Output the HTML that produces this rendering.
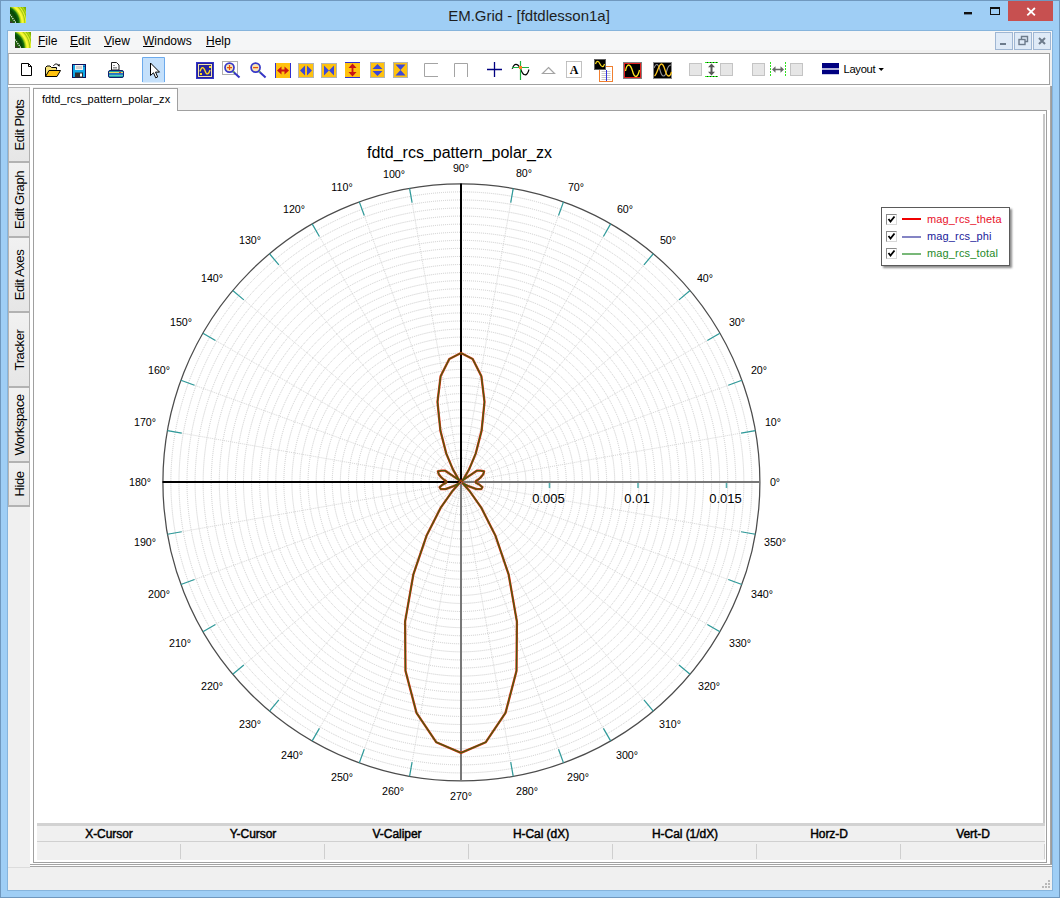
<!DOCTYPE html>
<html lang="en">
<head>
<meta charset="utf-8">
<title>EM.Grid - [fdtdlesson1a]</title>
<style>
*{box-sizing:border-box;margin:0;padding:0}
html,body{width:1060px;height:898px;overflow:hidden}
body{position:relative;background:#9fcef5;font-family:"Liberation Sans",Arial,sans-serif;font-size:12px;color:#000}
.abs{position:absolute}
#frame{position:absolute;left:0;top:0;width:1060px;height:898px;border:1px solid #7098be}
#shade{position:absolute;left:7px;top:30px;width:1046px;height:861px;border:1px solid #86b4dc}
#title{position:absolute;left:0;top:0;width:1060px;height:31px;text-align:center;font-size:15px;line-height:31px;color:#1e1e1e}
#title span{position:relative;left:-1px;top:0px}
.appico{position:absolute;width:16px;height:16px;overflow:hidden}
#client{position:absolute;left:8px;top:31px;width:1044px;height:859px;background:#f0f0f0}
#menubar{position:absolute;left:8px;top:31px;width:1044px;height:19px;background:#f5f6f7}
.mi{position:absolute;top:34px;font-size:12px;line-height:14px;height:14px;white-space:nowrap}
.mi u{text-decoration:underline;text-underline-offset:1px}
.mdib{position:absolute;top:32px;width:18px;height:18px;background:#dfeaf7;border:1px solid #9fb6d3}
#toolbar{position:absolute;left:8px;top:53px;width:1042px;height:32px;background:#fff;border:1px solid #a0a0a0;border-left-color:#b8b8b8}
#tbwhite{position:absolute;left:8px;top:85px;width:1042px;height:2px;background:#fff}
#redge{position:absolute;left:1050px;top:86px;width:2px;height:780px;background:#9c9c9c;border-left:1px solid #a6a6a6}
#ltabs{position:absolute;left:8px;top:87px;width:22px;height:779px;background:#f0f0f0}
.vt{position:absolute;left:8px;width:22px;border-top:2px solid #b2b2b2;border-right:1px solid #b0b0b0;border-left:1px solid #b4b4b4;background:linear-gradient(#f1f1f1,#e6e6e6)}
.vt span{position:absolute;left:50%;top:50%;white-space:nowrap;font-size:13px;letter-spacing:-0.4px;transform:translate(-50%,-50%) rotate(-90deg);transform-origin:center}
#mdiwhite{position:absolute;left:30px;top:87px;width:1020px;height:777px;background:#fff}
#tabrow{position:absolute;left:33px;top:87px;width:1017px;height:23px;background:#f0f0f0}
#panel{position:absolute;left:33px;top:110px;width:1014px;height:753px;background:#fff;border:1px solid #a0a0a0}
#ptab{position:absolute;left:33px;top:88px;width:145px;height:23px;background:#fff;border:1px solid #a0a0a0;border-bottom:none;font-size:11px;line-height:20px;padding-left:8px;white-space:nowrap;letter-spacing:0.04px}
#botline{position:absolute;left:30px;top:864px;width:1022px;height:3px;background:#fff;border-top:1px solid #a4a4a4;border-bottom:1px solid #a4a4a4}
#statline{position:absolute;left:8px;top:867px;width:22px;height:1px;background:#dcdcdc}
#vsplit{position:absolute;left:1043px;top:114px;width:2px;height:709px;background:#c8c8c8}
#hsplit{position:absolute;left:37px;top:823px;width:1008px;height:3px;background:#d2d2d2}
#ctab{position:absolute;left:37px;top:826px;width:1008px;height:34px;background:#f0f0f0}
#ctab .h{position:absolute;top:1px;height:15px;width:144px;text-align:center;font-size:12px;font-weight:normal;-webkit-text-stroke:0.45px #000;line-height:15px;letter-spacing:-0.05px}
#ctab .sep{position:absolute;left:0;top:15px;width:1008px;height:1px;background:#d0d0d0}
#ctab .c{position:absolute;top:18px;width:1px;height:15px;background:#cfcfcf}
#legend{position:absolute;left:881px;top:207px;width:129px;height:59px;background:#fff;border:1px solid #5a5a5a;box-shadow:2px 2px 2px rgba(0,0,0,.45)}
.lg{position:absolute;left:0;height:17px;width:128px;font-size:11px;line-height:17px}
.lg .cb{position:absolute;left:4px;top:3px;width:11px;height:11px;background:#fff;border:1px solid #8a8a8a;border-right-color:#d8d8d8;border-bottom-color:#d8d8d8}
.lg .cb svg{position:absolute;left:0;top:0}
.lg .ln{position:absolute;left:20px;top:8px;width:19px}
.lg .tx{position:absolute;left:45px;top:0;white-space:nowrap;letter-spacing:0.15px}
.grip i{position:absolute;width:2px;height:2px;background:#b8b8b8}
</style>
</head>
<body>
<div id="frame"></div>
<div id="title"><span>EM.Grid - [fdtdlesson1a]</span></div>
<!-- caption buttons -->
<svg class="abs" style="left:960px;top:0" width="100" height="31" viewBox="0 0 100 31">
<rect x="48" y="1" width="45" height="20" fill="#c75050"/>
<path d="M67.3 8 l7.6 7.4 M74.9 8 l-7.6 7.4" stroke="#fff" stroke-width="1.8" fill="none"/>
<rect x="4" y="12" width="8" height="2.4" fill="#111"/>
<rect x="30.5" y="7.5" width="9" height="7" fill="none" stroke="#111" stroke-width="1"/>
<rect x="30" y="7" width="10" height="2" fill="#111"/>
</svg>
<div id="shade"></div>
<div id="client"></div>
<div id="menubar"></div>
<svg class="abs" style="left:10px;top:7px" width="16" height="16" viewBox="0 0 16 16"><defs><radialGradient id="ga" cx="-8" cy="16" r="30" gradientUnits="userSpaceOnUse"><stop offset="0" stop-color="#3a6a10"/><stop offset="0.38" stop-color="#1c5c0c"/><stop offset="0.50" stop-color="#064406"/><stop offset="0.57" stop-color="#157010"/><stop offset="0.62" stop-color="#a8d018"/><stop offset="0.67" stop-color="#ffff38"/><stop offset="0.72" stop-color="#f0f030"/><stop offset="0.76" stop-color="#a0c810"/><stop offset="0.79" stop-color="#e8f434"/><stop offset="0.83" stop-color="#94c008"/><stop offset="0.86" stop-color="#b8dc18"/><stop offset="0.90" stop-color="#80b400"/><stop offset="1" stop-color="#6a9c00"/></radialGradient></defs><rect width="16" height="16" fill="url(#ga)"/><path d="M0 7.500 L6 16" stroke="#fff" stroke-width="1.100" stroke-dasharray="1.200 1" fill="none"/><rect x="0" y="14.500" width="2.500" height="1.500" fill="#403038"/></svg><svg class="abs" style="left:15px;top:32px" width="16" height="16" viewBox="0 0 16 16"><defs><radialGradient id="gb" cx="-8" cy="16" r="30" gradientUnits="userSpaceOnUse"><stop offset="0" stop-color="#3a6a10"/><stop offset="0.38" stop-color="#1c5c0c"/><stop offset="0.50" stop-color="#064406"/><stop offset="0.57" stop-color="#157010"/><stop offset="0.62" stop-color="#a8d018"/><stop offset="0.67" stop-color="#ffff38"/><stop offset="0.72" stop-color="#f0f030"/><stop offset="0.76" stop-color="#a0c810"/><stop offset="0.79" stop-color="#e8f434"/><stop offset="0.83" stop-color="#94c008"/><stop offset="0.86" stop-color="#b8dc18"/><stop offset="0.90" stop-color="#80b400"/><stop offset="1" stop-color="#6a9c00"/></radialGradient></defs><rect width="16" height="16" fill="url(#gb)"/><path d="M0 7.500 L6 16" stroke="#fff" stroke-width="1.100" stroke-dasharray="1.200 1" fill="none"/><rect x="0" y="14.500" width="2.500" height="1.500" fill="#403038"/></svg>
<div class="mi" style="left:38px"><u>F</u>ile</div>
<div class="mi" style="left:70px"><u>E</u>dit</div>
<div class="mi" style="left:104px"><u>V</u>iew</div>
<div class="mi" style="left:143px"><u>W</u>indows</div>
<div class="mi" style="left:206px"><u>H</u>elp</div>
<div class="mdib" style="left:995px"><svg width="16" height="16"><rect x="4" y="10" width="6" height="2" fill="#6d7b8c"/></svg></div>
<div class="mdib" style="left:1014px"><svg width="16" height="16"><path d="M6.5 6 v-2.5 h6 v5 h-2.5" fill="none" stroke="#6d7b8c" stroke-width="1.4"/><rect x="4" y="6.5" width="6" height="5" fill="none" stroke="#6d7b8c" stroke-width="1.4"/></svg></div>
<div class="mdib" style="left:1033px"><svg width="16" height="16"><path d="M5 5 l6 6 M11 5 l-6 6" stroke="#6d7b8c" stroke-width="2"/></svg></div>
<div id="toolbar"></div>
<div id="tbwhite"></div>
<svg class="abs" style="left:8px;top:53px" width="1042" height="32" viewBox="8 53 1042 32" font-family="'Liberation Sans',Arial,sans-serif">
<path d="M21.5 63.5 h7 l3 3 v9 h-10 z" fill="#fff" stroke="#000" stroke-width="1"/><path d="M28.5 63.5 v3 h3" fill="none" stroke="#000" stroke-width="1"/>
<path d="M45.5 76.5 v-9 l1.5-1.5 h3 l1.5 1.5 h5 v2" fill="#f6e27a" stroke="#000" stroke-width="1"/><path d="M45.5 76.5 l3.5-6 h11.5 l-3.5 6 z" fill="#ffc20e" stroke="#000" stroke-width="1" stroke-linejoin="round"/><path d="M53.5 66 c1-2.5 4-2.8 5.5 0" fill="none" stroke="#000" stroke-width="1"/><path d="M57.2 65 l2.3 1.8 l0.3-2.8 z" fill="#000"/>
<rect x="72.5" y="64.5" width="13" height="13" fill="#10a8e8" stroke="#10105a" stroke-width="1"/><rect x="75" y="65" width="8" height="5" fill="#f4f4f4"/><rect x="76" y="66" width="6" height="3" fill="#d0d0d0"/><rect x="75" y="72.5" width="8" height="5" fill="#303030"/><rect x="80" y="73.5" width="2" height="3" fill="#fff"/><rect x="83.5" y="66" width="1" height="1" fill="#10105a"/>
<path d="M111.5 70 v-7.500 h5 l2.500 2.500 v5 z" fill="#fff" stroke="#202020" stroke-width="1"/><path d="M113 65.500 h2 M113 67.500 h4 M113 69 h4" stroke="#808080" stroke-width="0.800"/><rect x="108.500" y="70.500" width="15" height="7" rx="1.500" fill="#20a0a0" stroke="#102070" stroke-width="1"/><rect x="109" y="72" width="14" height="1.200" fill="#e8e060"/><rect x="109" y="73.200" width="14" height="1.600" fill="#2060d0"/><rect x="109" y="74.800" width="14" height="1.100" fill="#60d0c0"/><rect x="119" y="71.800" width="2" height="1.200" fill="#e03030"/>
<rect x="142.5" y="57.500" width="22" height="25" fill="#c4e0fb" stroke="none"/><path d="M142.500 82 v-24.500 h22 v24.500" fill="none" stroke="#6caaec" stroke-width="1"/>
<path d="M150.500 63 v12.500 l3-2.700 l2.200 5 l2-0.900 l-2.200-4.800 h4 z" fill="#fff" stroke="#000" stroke-width="1" stroke-linejoin="miter"/>
<rect x="196.500" y="62.500" width="17" height="16" fill="#24249c" stroke="#3434c8" stroke-width="1"/><rect x="198.500" y="64.500" width="13" height="12" fill="none" stroke="#f4e4a8" stroke-width="1"/><path d="M200 71.500 c1.500-5 3.500-5 5-0.800 c1.500 4.500 3.500 4.200 5-0.700" fill="none" stroke="#ffd820" stroke-width="1.400"/><rect x="209" y="66" width="2" height="2" fill="#ffd820"/><rect x="200" y="73" width="2" height="2" fill="#ffd820"/>
<rect x="222.500" y="61.500" width="15" height="13" fill="#fff" stroke="#b0b0b0" stroke-width="1"/>
<path d="M232.7 71.200 l6.800 6.200" stroke="#3434c4" stroke-width="2" fill="none"/>
<path d="M232.7 71 l1.500 1.400" stroke="#70c040" stroke-width="1.600" fill="none"/>
<circle cx="229.5" cy="67.600" r="4.500" fill="#f8e6b4" stroke="#3838c8" stroke-width="1.700"/>
<path d="M227.0 67.600 h5 M229.5 65.100 v5" stroke="#e85008" stroke-width="1.200"/>
<path d="M258.8 71.200 l6.800 6.200" stroke="#3434c4" stroke-width="2" fill="none"/>
<path d="M258.8 71 l1.500 1.400" stroke="#70c040" stroke-width="1.600" fill="none"/>
<circle cx="255.6" cy="67.600" r="4.500" fill="#f8e6b4" stroke="#3838c8" stroke-width="1.700"/>
<path d="M253.1 67.600 h5" stroke="#e85008" stroke-width="1.300"/>
<rect x="275.0" y="63.0" width="16.0" height="15.0" fill="#ffc20e"/><path d="M275.500 63 v15 M290.500 63 v15" stroke="#3030d0" stroke-width="1"/><path d="M277 70.500 l4.500-4 v3.100 h3 v-3.100 l4.500 4 l-4.500 4 v-3.100 h-3 v3.100 z" fill="#c81414"/>
<rect x="298.0" y="63.0" width="16.0" height="15.0" fill="#ffc20e"/><rect x="298.5" y="63.5" width="15.0" height="14.0" fill="none" stroke="#b4b4b4" stroke-width="1"/><path d="M300 70.500 l5-5 v10 z M312 70.500 l-5-5 v10 z" fill="#3c48d8"/>
<rect x="321.0" y="63.0" width="16.0" height="15.0" fill="#ffc20e"/><rect x="321.5" y="63.5" width="15.0" height="14.0" fill="none" stroke="#b4b4b4" stroke-width="1"/><path d="M329 70.500 l-5-5 v10 z M329 70.500 l5-5 v10 z" fill="#3c48d8"/>
<rect x="345.0" y="62.0" width="15.0" height="16.0" fill="#ffc20e"/><path d="M345 62.500 h15 M345 77.500 h15" stroke="#3030d0" stroke-width="1"/><path d="M352.500 63.500 l4 4.500 h-3.100 v4 h3.100 l-4 4.500 l-4-4.500 h3.100 v-4 h-3.100 z" fill="#c81414"/>
<rect x="370.0" y="62.0" width="15.0" height="16.0" fill="#ffc20e"/><rect x="370.5" y="62.5" width="14.0" height="15.0" fill="none" stroke="#b4b4b4" stroke-width="1"/><path d="M377.500 64 l5 5 h-10 z M377.500 76 l5-5 h-10 z" fill="#3c48d8"/>
<rect x="393.0" y="62.0" width="15.0" height="16.0" fill="#ffc20e"/><rect x="393.5" y="62.5" width="14.0" height="15.0" fill="none" stroke="#b4b4b4" stroke-width="1"/><path d="M400.500 70 l-5-5.500 h10 z M400.500 70 l5 5.500 h-10 z" fill="#3c48d8"/>
<path d="M438 63.500 h-13.500 v13 h13.500" fill="none" stroke="#a4a4a4" stroke-width="1"/>
<path d="M454.500 77 v-13.500 h13 v13.500" fill="none" stroke="#a4a4a4" stroke-width="1"/>
<path d="M487 69.500 h15 M494.500 62 v15" stroke="#000080" stroke-width="1.300"/>
<path d="M512.500 68.500 c1.500-5.500 5-5.500 8 0 c2.500 8 6.500 8.500 8.500 1" fill="none" stroke="#000" stroke-width="1.100"/><path d="M511.800 68.500 l1.800-1.200" stroke="#000" stroke-width="1"/><path d="M520.500 61 v19 M512 67.500 h17" stroke="#20b040" stroke-width="1.200"/><rect x="519" y="66" width="3" height="3" fill="#ff8020"/>
<path d="M548.500 67.500 l6 6 h-12 z" fill="none" stroke="#a4a4a4" stroke-width="1.200"/>
<rect x="566.500" y="61.500" width="15" height="16" fill="#fff" stroke="#b4b4b4" stroke-width="0.800"/><text x="574" y="74" font-family="'Liberation Serif',serif" font-weight="bold" font-size="12" text-anchor="middle" fill="#000">A</text>
<rect x="599.500" y="66.500" width="13" height="15" fill="#fff" stroke="#f08030" stroke-width="1"/><path d="M601.500 71.500 h9 M601.500 73.500 h9 M601.500 75.500 h9 M601.500 77.500 h9 M601.500 79.500 h9" stroke="#c8c8c8" stroke-width="1"/><path d="M606.500 70 v11" stroke="#3030e0" stroke-width="1"/><rect x="594.500" y="59.500" width="11" height="10" fill="#000" stroke="#606060" stroke-width="1"/><path d="M595.500 64 c1-3.500 3-3.500 4.500 0 c1.500 3.500 3.500 3.500 4.500 0" fill="none" stroke="#ffe020" stroke-width="1.200"/>
<rect x="623.500" y="62.500" width="18" height="16" fill="#e02020" stroke="#808080" stroke-width="1"/><rect x="625" y="64" width="15" height="13" fill="#000"/><path d="M625.500 71 c1.500-8 4.500-8 7 0 c2 7.500 5 7.500 7-1" fill="none" stroke="#ffe820" stroke-width="1.300"/>
<rect x="653.500" y="62.500" width="18" height="16" fill="#000" stroke="#8a8a8a" stroke-width="1"/><path d="M654 68 c2-5 4-5 6 2 c2 8 5 8 7 0 c1-3.500 2-5 4-5" fill="none" stroke="#909090" stroke-width="1.100"/><path d="M654.500 76 c3-2 4-12 7-12 c3.500 0 3.500 12 7 12 c1.500 0 2.500-2 3-4" fill="none" stroke="#ffc820" stroke-width="1.300"/>
<rect x="689.5" y="63.500" width="12" height="12" fill="#e6e6e6" stroke="#c4c4c4" stroke-width="1"/>
<rect x="720.5" y="63.500" width="12" height="12" fill="#e6e6e6" stroke="#c4c4c4" stroke-width="1"/>
<rect x="752.5" y="63.500" width="12" height="12" fill="#e6e6e6" stroke="#c4c4c4" stroke-width="1"/>
<rect x="790.5" y="63.500" width="12" height="12" fill="#e6e6e6" stroke="#c4c4c4" stroke-width="1"/>
<path d="M705 62.500 h13 M705 76.500 h13" stroke="#103010" stroke-width="1"/><path d="M705 62.500 h13 M705 76.500 h13" stroke="#30f020" stroke-width="1" stroke-dasharray="2 1"/><path d="M711.500 63.500 l3.500 3.800 h-2.500 v4.400 h2.500 l-3.500 3.800 l-3.500-3.800 h2.500 v-4.400 h-2.500 z" fill="#585858"/>
<path d="M770.500 62 v14 M785.500 62 v14" stroke="#30e020" stroke-width="1" stroke-dasharray="2 1"/><path d="M772 69.500 l3.500-3.200 v2.400 h5 v-2.400 l3.500 3.200 l-3.500 3.200 v-2.400 h-5 v2.400 z" fill="#686868"/>
<rect x="822" y="63" width="17" height="5.300" fill="#000080"/><rect x="822" y="69.700" width="17" height="4.500" fill="#000080"/>
<text x="843.500" y="72.600" font-size="11.200" fill="#000" letter-spacing="-0.300">Layout</text>
<path d="M878.500 68 h5.400 l-2.700 3 z" fill="#000"/>
</svg>
<div id="ltabs"></div>
<div class="vt" style="top:87px;height:75px;border-top-width:1px"><span>Edit Plots</span></div>
<div class="vt" style="top:161px;height:76px"><span>Edit Graph</span></div>
<div class="vt" style="top:236px;height:76px"><span>Edit Axes</span></div>
<div class="vt" style="top:311px;height:76px"><span>Tracker</span></div>
<div class="vt" style="top:386px;height:76px"><span>Workspace</span></div>
<div class="vt" style="top:461px;height:46px;border-bottom:2px solid #b2b2b2"><span>Hide</span></div>
<div id="mdiwhite"></div>
<div id="tabrow"></div>
<div id="panel"></div>
<div id="ptab">fdtd_rcs_pattern_polar_zx</div>
<div id="redge"></div>
<div id="botline"></div>
<div id="statline"></div>
<svg class="chart" width="1012" height="712" viewBox="34 111 1012 712" style="position:absolute;left:34px;top:111px;font-family:'Liberation Sans',Arial,sans-serif">
<g fill="none" stroke="#cbcbcb" stroke-width="1" stroke-dasharray="1 1">
<circle cx="461.4" cy="482.4" r="8.07"/>
<circle cx="461.4" cy="482.4" r="16.14"/>
<circle cx="461.4" cy="482.4" r="24.21"/>
<circle cx="461.4" cy="482.4" r="32.28"/>
<circle cx="461.4" cy="482.4" r="40.35"/>
<circle cx="461.4" cy="482.4" r="48.42"/>
<circle cx="461.4" cy="482.4" r="56.49"/>
<circle cx="461.4" cy="482.4" r="64.56"/>
<circle cx="461.4" cy="482.4" r="72.63"/>
<circle cx="461.4" cy="482.4" r="80.70"/>
<circle cx="461.4" cy="482.4" r="88.77"/>
<circle cx="461.4" cy="482.4" r="96.84"/>
<circle cx="461.4" cy="482.4" r="104.91"/>
<circle cx="461.4" cy="482.4" r="112.98"/>
<circle cx="461.4" cy="482.4" r="121.05"/>
<circle cx="461.4" cy="482.4" r="129.12"/>
<circle cx="461.4" cy="482.4" r="137.19"/>
<circle cx="461.4" cy="482.4" r="145.26"/>
<circle cx="461.4" cy="482.4" r="153.33"/>
<circle cx="461.4" cy="482.4" r="161.40"/>
<circle cx="461.4" cy="482.4" r="169.47"/>
<circle cx="461.4" cy="482.4" r="177.54"/>
<circle cx="461.4" cy="482.4" r="185.61"/>
<circle cx="461.4" cy="482.4" r="193.68"/>
<circle cx="461.4" cy="482.4" r="201.75"/>
<circle cx="461.4" cy="482.4" r="209.82"/>
<circle cx="461.4" cy="482.4" r="217.89"/>
<circle cx="461.4" cy="482.4" r="225.96"/>
<circle cx="461.4" cy="482.4" r="234.03"/>
<circle cx="461.4" cy="482.4" r="242.10"/>
<circle cx="461.4" cy="482.4" r="250.17"/>
<circle cx="461.4" cy="482.4" r="258.24"/>
<circle cx="461.4" cy="482.4" r="266.31"/>
<circle cx="461.4" cy="482.4" r="274.38"/>
<circle cx="461.4" cy="482.4" r="282.45"/>
<circle cx="461.4" cy="482.4" r="290.52"/>
</g>
<g stroke="#d6d6d6" stroke-width="1" stroke-dasharray="1 1">
<line x1="461.4" y1="482.4" x2="755.37" y2="430.57"/>
<line x1="461.4" y1="482.4" x2="741.90" y2="380.31"/>
<line x1="461.4" y1="482.4" x2="719.91" y2="333.15"/>
<line x1="461.4" y1="482.4" x2="690.06" y2="290.53"/>
<line x1="461.4" y1="482.4" x2="653.27" y2="253.74"/>
<line x1="461.4" y1="482.4" x2="610.65" y2="223.89"/>
<line x1="461.4" y1="482.4" x2="563.49" y2="201.90"/>
<line x1="461.4" y1="482.4" x2="513.23" y2="188.43"/>
<line x1="461.4" y1="482.4" x2="409.57" y2="188.43"/>
<line x1="461.4" y1="482.4" x2="359.31" y2="201.90"/>
<line x1="461.4" y1="482.4" x2="312.15" y2="223.89"/>
<line x1="461.4" y1="482.4" x2="269.53" y2="253.74"/>
<line x1="461.4" y1="482.4" x2="232.74" y2="290.53"/>
<line x1="461.4" y1="482.4" x2="202.89" y2="333.15"/>
<line x1="461.4" y1="482.4" x2="180.90" y2="380.31"/>
<line x1="461.4" y1="482.4" x2="167.43" y2="430.57"/>
<line x1="461.4" y1="482.4" x2="167.43" y2="534.23"/>
<line x1="461.4" y1="482.4" x2="180.90" y2="584.49"/>
<line x1="461.4" y1="482.4" x2="202.89" y2="631.65"/>
<line x1="461.4" y1="482.4" x2="232.74" y2="674.27"/>
<line x1="461.4" y1="482.4" x2="269.53" y2="711.06"/>
<line x1="461.4" y1="482.4" x2="312.15" y2="740.91"/>
<line x1="461.4" y1="482.4" x2="359.31" y2="762.90"/>
<line x1="461.4" y1="482.4" x2="409.57" y2="776.37"/>
<line x1="461.4" y1="482.4" x2="513.23" y2="776.37"/>
<line x1="461.4" y1="482.4" x2="563.49" y2="762.90"/>
<line x1="461.4" y1="482.4" x2="610.65" y2="740.91"/>
<line x1="461.4" y1="482.4" x2="653.27" y2="711.06"/>
<line x1="461.4" y1="482.4" x2="690.06" y2="674.27"/>
<line x1="461.4" y1="482.4" x2="719.91" y2="631.65"/>
<line x1="461.4" y1="482.4" x2="741.90" y2="584.49"/>
<line x1="461.4" y1="482.4" x2="755.37" y2="534.23"/>
</g>
<circle cx="461.4" cy="482.4" r="298.5" fill="none" stroke="#4c4c4c" stroke-width="1.25"/>
<g stroke="#2e9a9a" stroke-width="1.2">
<line x1="741.09" y1="433.08" x2="755.37" y2="430.57"/>
<line x1="728.27" y1="385.27" x2="741.90" y2="380.31"/>
<line x1="707.35" y1="340.40" x2="719.91" y2="333.15"/>
<line x1="678.96" y1="299.85" x2="690.06" y2="290.53"/>
<line x1="643.95" y1="264.84" x2="653.27" y2="253.74"/>
<line x1="603.40" y1="236.45" x2="610.65" y2="223.89"/>
<line x1="558.53" y1="215.53" x2="563.49" y2="201.90"/>
<line x1="510.72" y1="202.71" x2="513.23" y2="188.43"/>
<line x1="412.08" y1="202.71" x2="409.57" y2="188.43"/>
<line x1="364.27" y1="215.53" x2="359.31" y2="201.90"/>
<line x1="319.40" y1="236.45" x2="312.15" y2="223.89"/>
<line x1="278.85" y1="264.84" x2="269.53" y2="253.74"/>
<line x1="243.84" y1="299.85" x2="232.74" y2="290.53"/>
<line x1="215.45" y1="340.40" x2="202.89" y2="333.15"/>
<line x1="194.53" y1="385.27" x2="180.90" y2="380.31"/>
<line x1="181.71" y1="433.08" x2="167.43" y2="430.57"/>
<line x1="181.71" y1="531.72" x2="167.43" y2="534.23"/>
<line x1="194.53" y1="579.53" x2="180.90" y2="584.49"/>
<line x1="215.45" y1="624.40" x2="202.89" y2="631.65"/>
<line x1="243.84" y1="664.95" x2="232.74" y2="674.27"/>
<line x1="278.85" y1="699.96" x2="269.53" y2="711.06"/>
<line x1="319.40" y1="728.35" x2="312.15" y2="740.91"/>
<line x1="364.27" y1="749.27" x2="359.31" y2="762.90"/>
<line x1="412.08" y1="762.09" x2="409.57" y2="776.37"/>
<line x1="510.72" y1="762.09" x2="513.23" y2="776.37"/>
<line x1="558.53" y1="749.27" x2="563.49" y2="762.90"/>
<line x1="603.40" y1="728.35" x2="610.65" y2="740.91"/>
<line x1="643.95" y1="699.96" x2="653.27" y2="711.06"/>
<line x1="678.96" y1="664.95" x2="690.06" y2="674.27"/>
<line x1="707.35" y1="624.40" x2="719.91" y2="631.65"/>
<line x1="728.27" y1="579.53" x2="741.90" y2="584.49"/>
<line x1="741.09" y1="531.72" x2="755.37" y2="534.23"/>
</g>
<line x1="461.0" y1="482.0" x2="759.5" y2="482.0" stroke="#777" stroke-width="2"/>
<line x1="461.0" y1="482.0" x2="461.0" y2="780.5" stroke="#777" stroke-width="2"/>
<line x1="162.5" y1="482.0" x2="461.0" y2="482.0" stroke="#000" stroke-width="2"/>
<line x1="461.0" y1="183.5" x2="461.0" y2="482.0" stroke="#000" stroke-width="2"/>
<g stroke="#55aeae" stroke-width="1.6">
<line x1="549.5" y1="483.0" x2="549.5" y2="488.0"/>
<line x1="638.0" y1="483.0" x2="638.0" y2="488.0"/>
<line x1="726.5" y1="483.0" x2="726.5" y2="488.0"/>
</g>
<path d="M461.0 353.0 L472.7 359.0 L481.4 376.3 L484.5 401.9 L481.6 430.6 L475.7 453.6 L469.1 469.4 L464.1 478.1 L462.0 480.9 L464.0 479.4 L476.8 470.7 L480.6 470.7 L484.1 471.4 L483.2 474.3 L480.9 477.2 L478.3 479.5 L475.8 481.3 L475.8 482.7 L479.3 484.6 L482.4 487.2 L481.3 489.0 L476.5 489.1 L468.4 486.2 L462.6 483.2 L463.3 484.0 L469.3 490.7 L481.4 507.9 L495.5 535.8 L508.6 574.3 L516.9 621.6 L516.5 670.9 L505.5 712.9 L485.8 742.2 L461.0 752.9 L436.2 742.2 L416.5 712.9 L405.5 670.9 L405.1 621.6 L413.4 574.3 L426.5 535.8 L440.6 507.9 L452.7 490.7 L458.7 484.0 L459.4 483.2 L453.6 486.2 L445.5 489.1 L440.7 489.0 L439.6 487.2 L442.7 484.6 L446.2 482.7 L446.2 481.3 L443.7 479.5 L441.1 477.2 L438.8 474.3 L437.9 471.4 L441.4 470.7 L445.2 470.7 L458.0 479.4 L460.0 480.9 L457.9 478.1 L452.9 469.4 L446.3 453.6 L440.4 430.6 L437.5 401.9 L440.6 376.3 L449.3 359.0 Z" fill="none" stroke="#e03010" stroke-width="2.3" stroke-linejoin="round"/>
<path d="M461.0 353.0 L472.7 359.0 L481.4 376.3 L484.5 401.9 L481.6 430.6 L475.7 453.6 L469.1 469.4 L464.1 478.1 L462.0 480.9 L464.0 479.4 L476.8 470.7 L480.6 470.7 L484.1 471.4 L483.2 474.3 L480.9 477.2 L478.3 479.5 L475.8 481.3 L475.8 482.7 L479.3 484.6 L482.4 487.2 L481.3 489.0 L476.5 489.1 L468.4 486.2 L462.6 483.2 L463.3 484.0 L469.3 490.7 L481.4 507.9 L495.5 535.8 L508.6 574.3 L516.9 621.6 L516.5 670.9 L505.5 712.9 L485.8 742.2 L461.0 752.9 L436.2 742.2 L416.5 712.9 L405.5 670.9 L405.1 621.6 L413.4 574.3 L426.5 535.8 L440.6 507.9 L452.7 490.7 L458.7 484.0 L459.4 483.2 L453.6 486.2 L445.5 489.1 L440.7 489.0 L439.6 487.2 L442.7 484.6 L446.2 482.7 L446.2 481.3 L443.7 479.5 L441.1 477.2 L438.8 474.3 L437.9 471.4 L441.4 470.7 L445.2 470.7 L458.0 479.4 L460.0 480.9 L457.9 478.1 L452.9 469.4 L446.3 453.6 L440.4 430.6 L437.5 401.9 L440.6 376.3 L449.3 359.0 Z" fill="none" stroke="#4a5a10" stroke-width="1.3" stroke-linejoin="round"/>
<text x="459.5" y="158" font-size="16" text-anchor="middle" fill="#000">fdtd_rcs_pattern_polar_zx</text>
<g font-size="10.7" text-anchor="middle" fill="#000">
<text x="773" y="426">10°</text>
<text x="759" y="374">20°</text>
<text x="737" y="326">30°</text>
<text x="705" y="282">40°</text>
<text x="668" y="244">50°</text>
<text x="625" y="213">60°</text>
<text x="576" y="191">70°</text>
<text x="524" y="177">80°</text>
<text x="461" y="172">90°</text>
<text x="394" y="178">100°</text>
<text x="342" y="191">110°</text>
<text x="294" y="213">120°</text>
<text x="250" y="244">130°</text>
<text x="212" y="282">140°</text>
<text x="181" y="326">150°</text>
<text x="159" y="374">160°</text>
<text x="145" y="426">170°</text>
<text x="140" y="486">180°</text>
<text x="145" y="546">190°</text>
<text x="159" y="598">200°</text>
<text x="180" y="647">210°</text>
<text x="212" y="690">220°</text>
<text x="250" y="728">230°</text>
<text x="292" y="759">240°</text>
<text x="342" y="781">250°</text>
<text x="393" y="795">260°</text>
<text x="461" y="800">270°</text>
<text x="527" y="795">280°</text>
<text x="578" y="781">290°</text>
<text x="627" y="759">300°</text>
<text x="670" y="728">310°</text>
<text x="709" y="690">320°</text>
<text x="740" y="647">330°</text>
<text x="762" y="598">340°</text>
<text x="775" y="546">350°</text>
<text x="775" y="486">0°</text>
</g>
<g font-size="13" text-anchor="middle" fill="#000">
<text x="548.5" y="503">0.005</text>
<text x="637.0" y="503">0.01</text>
<text x="725.5" y="503">0.015</text>
</g>
</svg>
<div id="vsplit"></div>
<div id="hsplit"></div>
<div id="ctab">
<div class="h" style="left:0">X-Cursor</div>
<div class="h" style="left:144px">Y-Cursor</div>
<div class="h" style="left:288px">V-Caliper</div>
<div class="h" style="left:432px">H-Cal (dX)</div>
<div class="h" style="left:576px">H-Cal (1/dX)</div>
<div class="h" style="left:720px">Horz-D</div>
<div class="h" style="left:864px">Vert-D</div>
<div class="sep"></div>
<div class="c" style="left:143px"></div><div class="c" style="left:287px"></div><div class="c" style="left:431px"></div><div class="c" style="left:575px"></div><div class="c" style="left:719px"></div><div class="c" style="left:863px"></div><div class="c" style="left:1007px"></div>
</div>
<div id="legend">
<div class="lg" style="top:3px"><div class="cb"><svg width="9" height="9"><path d="M1.5 4 L3.5 6.5 L7.5 1.5" fill="none" stroke="#000" stroke-width="1.8"/></svg></div><div class="ln" style="border-top:2px solid #f00000;top:7px"></div><div class="tx" style="color:#e8102a">mag_rcs_theta</div></div>
<div class="lg" style="top:20px"><div class="cb"><svg width="9" height="9"><path d="M1.5 4 L3.5 6.5 L7.5 1.5" fill="none" stroke="#000" stroke-width="1.8"/></svg></div><div class="ln" style="border-top:2px solid #8484c4;top:8px;height:0"></div><div class="tx" style="color:#1a1a9a">mag_rcs_phi</div></div>
<div class="lg" style="top:37px"><div class="cb"><svg width="9" height="9"><path d="M1.5 4 L3.5 6.5 L7.5 1.5" fill="none" stroke="#000" stroke-width="1.8"/></svg></div><div class="ln" style="border-top:2px solid #78b878;top:8px"></div><div class="tx" style="color:#1f8a2a">mag_rcs_total</div></div>
</div>
<div class="grip" style="position:absolute;left:1040px;top:878px;width:12px;height:12px"><i style="left:8px;top:2px"></i><i style="left:5px;top:5px"></i><i style="left:8px;top:5px"></i><i style="left:2px;top:8px"></i><i style="left:5px;top:8px"></i><i style="left:8px;top:8px"></i></div>
</body>
</html>
